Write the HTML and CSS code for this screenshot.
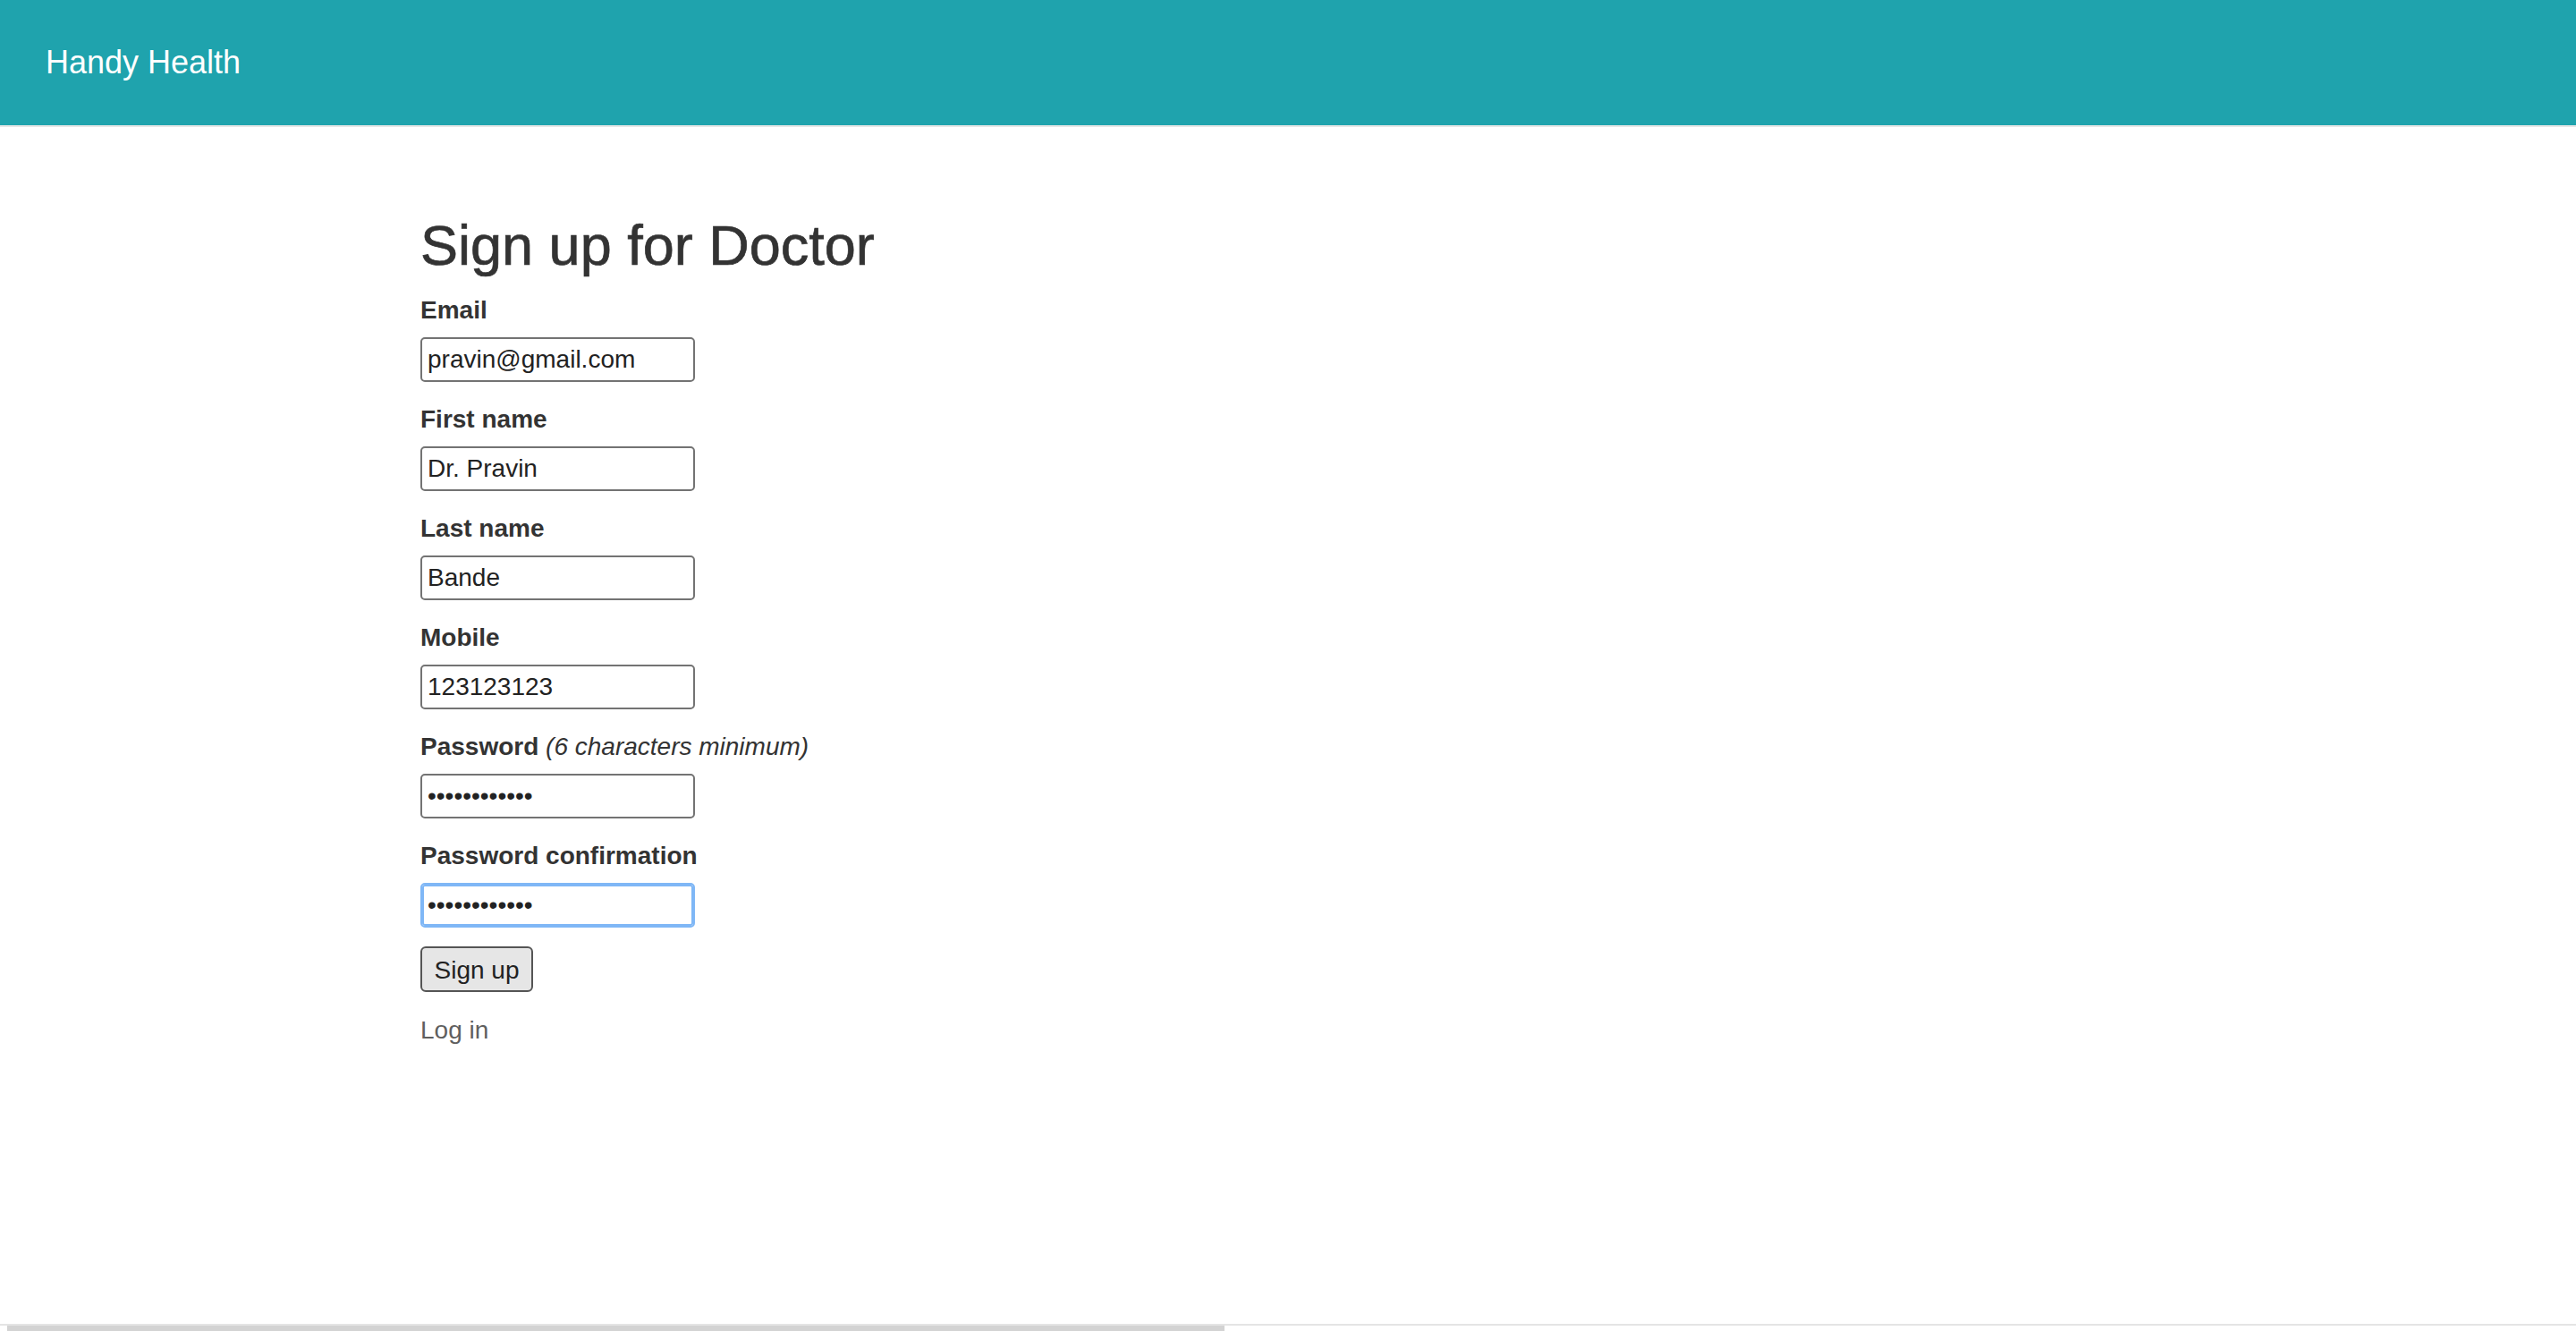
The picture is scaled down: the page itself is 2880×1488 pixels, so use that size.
FILE: index.html
```html
<!DOCTYPE html>
<html lang="en">
<head>
<meta charset="utf-8">
<title>Handy Health</title>
<link rel="stylesheet" href="styles.css">
</head>
<body>
<header class="navbar">
  <a class="brand" href="#">Handy Health</a>
</header>
<main class="container">
  <h2 class="title">Sign up for Doctor</h2>
  <form class="form">
    <div class="field">
      <label class="label">Email</label>
      <input class="input" type="email" value="pravin@gmail.com">
    </div>
    <div class="field">
      <label class="label">First name</label>
      <input class="input" type="text" value="Dr. Pravin">
    </div>
    <div class="field">
      <label class="label">Last name</label>
      <input class="input" type="text" value="Bande">
    </div>
    <div class="field">
      <label class="label">Mobile</label>
      <input class="input" type="text" value="123123123">
    </div>
    <div class="field">
      <label class="label">Password <em class="hint">(6 characters minimum)</em></label>
      <input class="input" type="password" value="123123123123">
    </div>
    <div class="field">
      <label class="label">Password confirmation</label>
      <input class="input input-focus" type="password" value="123123123123">
    </div>
    <div class="actions">
      <button class="button" type="button">Sign up</button>
    </div>
  </form>
  <a class="link" href="#">Log in</a>
</main>
<div class="hscroll"><div class="hscroll-thumb"></div></div>
</body>
</html>
```

FILE: styles.css
```css
html, body {
  margin: 0;
  padding: 0;
  background: #ffffff;
}

body {
  font-family: "Liberation Sans", Arial, Helvetica, sans-serif;
  font-size: 28px;
  line-height: 40px;
  color: #333333;
}

.navbar {
  height: 140px;
  background: #1fa3ad;
  border-bottom: 2px solid #e7e7e7;
  display: flex;
  align-items: center;
  padding-left: 51px;
}

.brand {
  color: #ffffff;
  font-size: 36px;
  line-height: 40px;
  text-decoration: none;
}

.container {
  padding: 98px 0 0 470px;
}

.title {
  margin: 0 0 17px 0;
  font-size: 63px;
  line-height: 68px;
  font-weight: 400;
  color: #333333;
  -webkit-text-stroke: 0.7px #333333;
}

.form {
  display: flex;
  flex-direction: column;
  align-items: flex-start;
}

.field {
  display: flex;
  flex-direction: column;
  align-items: flex-start;
  margin-bottom: 20px;
}

.label {
  display: block;
  font-weight: 700;
  line-height: 40px;
  padding-top: 2px;
  margin-bottom: 10px;
  color: #333333;
}

.hint {
  font-weight: 400;
  font-style: italic;
}

.input {
  box-sizing: border-box;
  width: 307px;
  height: 50px;
  margin: 0;
  padding: 0 6px;
  border: 2px solid #737373;
  border-radius: 5px;
  font-family: "Liberation Sans", Arial, Helvetica, sans-serif;
  font-size: 28px;
  color: #222222;
  background: #ffffff;
  outline: none;
}

.input-focus {
  border-color: #7fb7f6;
  box-shadow: inset 0 0 0 2px #7fb7f6;
}

.actions {
  margin-top: 1px;
}

.button {
  box-sizing: border-box;
  height: 51px;
  width: 126px;
  margin: 0;
  padding: 3px 0 0 0;
  border: 2px solid #555555;
  border-radius: 6px;
  background: #e6e6e6;
  font-family: "Liberation Sans", Arial, Helvetica, sans-serif;
  font-size: 28px;
  color: #222222;
}

.link {
  display: block;
  margin-top: 23px;
  width: max-content;
  color: #5f5f5f;
  text-decoration: none;
}

.hscroll {
  position: fixed;
  left: 0;
  right: 0;
  bottom: 0;
  height: 6px;
  border-top: 2px solid #e4e4e4;
  background: #ffffff;
}

.hscroll-thumb {
  margin-left: 8px;
  width: 1361px;
  height: 6px;
  background: #d3d3d3;
}
```
